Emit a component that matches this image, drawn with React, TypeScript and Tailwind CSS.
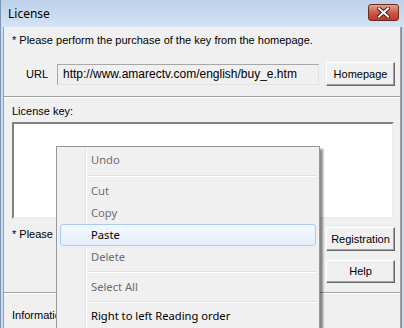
import React from 'react';

const dlg = "font-['Liberation_Sans',sans-serif] text-[11px] leading-[13px] text-black";
const menuFont = "font-['Noto_Sans',sans-serif] text-[11.2px] leading-[14px]";

function Button({ label, className = '' }: { label: string; className?: string }) {
    return (
        <div
            className={`flex items-center justify-center bg-[#f0f0f0] border border-t-white border-l-white border-r-[#696969] border-b-[#696969] shadow-[inset_-1px_-1px_0_#a0a0a0] ${dlg} ${className}`}
        >
            {label}
        </div>
    );
}

function Etched() {
    return <div className="h-[2px] border-t border-t-[#a0a0a0] border-b border-b-white" />;
}

function MenuItem({ label, disabled, active }: { label: string; disabled?: boolean; active?: boolean }) {
    return (
        <div className="h-[22px] px-[3px] flex">
            <div
                className={`flex-1 flex items-center pl-[30px] rounded-[3px] border ${
                    active
                        ? 'border-[#a8cbf1] bg-gradient-to-b from-[#f3f8fe] to-[#e4eefb]'
                        : 'border-transparent'
                } ${disabled ? 'text-[#6d6d6d]' : 'text-black'}`}
            >
                {label}
            </div>
        </div>
    );
}

function MenuSep({ h }: { h: string }) {
    return (
        <div className={`${h} flex items-center pl-[31px] pr-[2px]`}>
            <div className="flex-1 h-[2px] border-t border-t-[#e0e0e0] border-b border-b-white" />
        </div>
    );
}

export default function App() {
    return (
        <div className="w-[404px] h-[328px] relative overflow-hidden bg-[#cadcf0] border-l border-l-[#7d96b4] flex flex-col">
            {/* Title bar */}
            <div className="h-[27px] shrink-0 flex items-center pl-[7px] pr-[5px] bg-gradient-to-b from-[#bcd0e9] to-[#d5e3f4]">
                <span className="font-['Noto_Sans',sans-serif] text-[12px] leading-[16px] text-black">License</span>
                <div className="ml-auto mt-[-3px] w-[31px] h-[17px] rounded-[3px] border border-[#6b2a22] bg-gradient-to-b from-[#e4a192] via-[#cf5a45] to-[#b8382a] flex items-center justify-center">
                    <svg width="13" height="11" viewBox="0 0 13 11">
                        <path d="M2 1.5 L11 9.5 M11 1.5 L2 9.5" stroke="#4a1c16" strokeWidth="4" strokeLinecap="square" />
                        <path d="M2 1.5 L11 9.5 M11 1.5 L2 9.5" stroke="#ffffff" strokeWidth="2" strokeLinecap="square" />
                    </svg>
                </div>
            </div>

            {/* Client */}
            <div className="flex-1 flex mx-[2px] border-r-[3px] border-r-[#3ba6e5]">
                <div className="flex-1 flex flex-col bg-[#f0f0f0] border-l border-l-[#a0a0a0] border-r border-r-[#a0a0a0]">
                    <div className={`${dlg} pl-[8px] mt-[7px]`}>* Please perform the purchase of the key from the homepage.</div>

                    <div className="flex items-center mt-[15px] pl-[22px] pr-[5px]">
                        <span className={`${dlg} w-[31px]`}>URL</span>
                        <div
                            className={`w-[262px] h-[21px] flex items-center pl-[5px] bg-[#f0f0f0] border border-t-[#a7a7a7] border-l-[#a7a7a7] border-r-[#e3e3e3] border-b-[#e3e3e3] ${dlg} text-[12px]`}
                        >
                            http://www.amarectv.com/english/buy_e.htm
                        </div>
                        <Button label="Homepage" className="ml-[7px] w-[69px] h-[24px]" />
                    </div>

                    <div className="mt-[10px]">
                        <Etched />
                    </div>

                    <div className={`${dlg} pl-[8px] mt-[7px]`}>License key:</div>

                    <div className="mt-[4px] ml-[8px] mr-[6px] h-[97px] shrink-0 bg-white border-2 border-t-[#828282] border-l-[#828282] border-r-[#ececec] border-b-[#ececec]" />

                    <div className="flex mt-[8px] pr-[5px]">
                        <div className={`${dlg} pl-[8px] pt-[1px] flex-1`}>* Please input the license key.</div>
                        <div className="flex flex-col gap-[9px]">
                            <Button label="Registration" className="w-[69px] h-[24px]" />
                            <Button label="Help" className="w-[69px] h-[23px]" />
                        </div>
                    </div>

                    <div className="mt-[9px]">
                        <Etched />
                    </div>

                    <div className={`${dlg} pl-[8px] mt-[15px]`}>Information</div>
                </div>
            </div>

            {/* Context menu */}
            <div
                className={`absolute left-[55px] top-[146px] w-[264px] h-[200px] bg-[#f0f0f0] border border-[#979797] shadow-[3px_3px_2px_rgba(0,0,0,0.45)] pt-[2px] ${menuFont}`}
            >
                <div className="absolute left-[28px] top-0 bottom-0 w-[2px] border-l border-l-[#e2e3e3] border-r border-r-white" />
                <div className="relative">
                    <MenuItem label="Undo" disabled />
                    <MenuSep h="h-[9px]" />
                    <MenuItem label="Cut" disabled />
                    <MenuItem label="Copy" disabled />
                    <MenuItem label="Paste" active />
                    <MenuItem label="Delete" disabled />
                    <MenuSep h="h-[8px]" />
                    <MenuItem label="Select All" disabled />
                    <MenuSep h="h-[7px]" />
                    <MenuItem label="Right to left Reading order" />
                </div>
            </div>
        </div>
    );
}
